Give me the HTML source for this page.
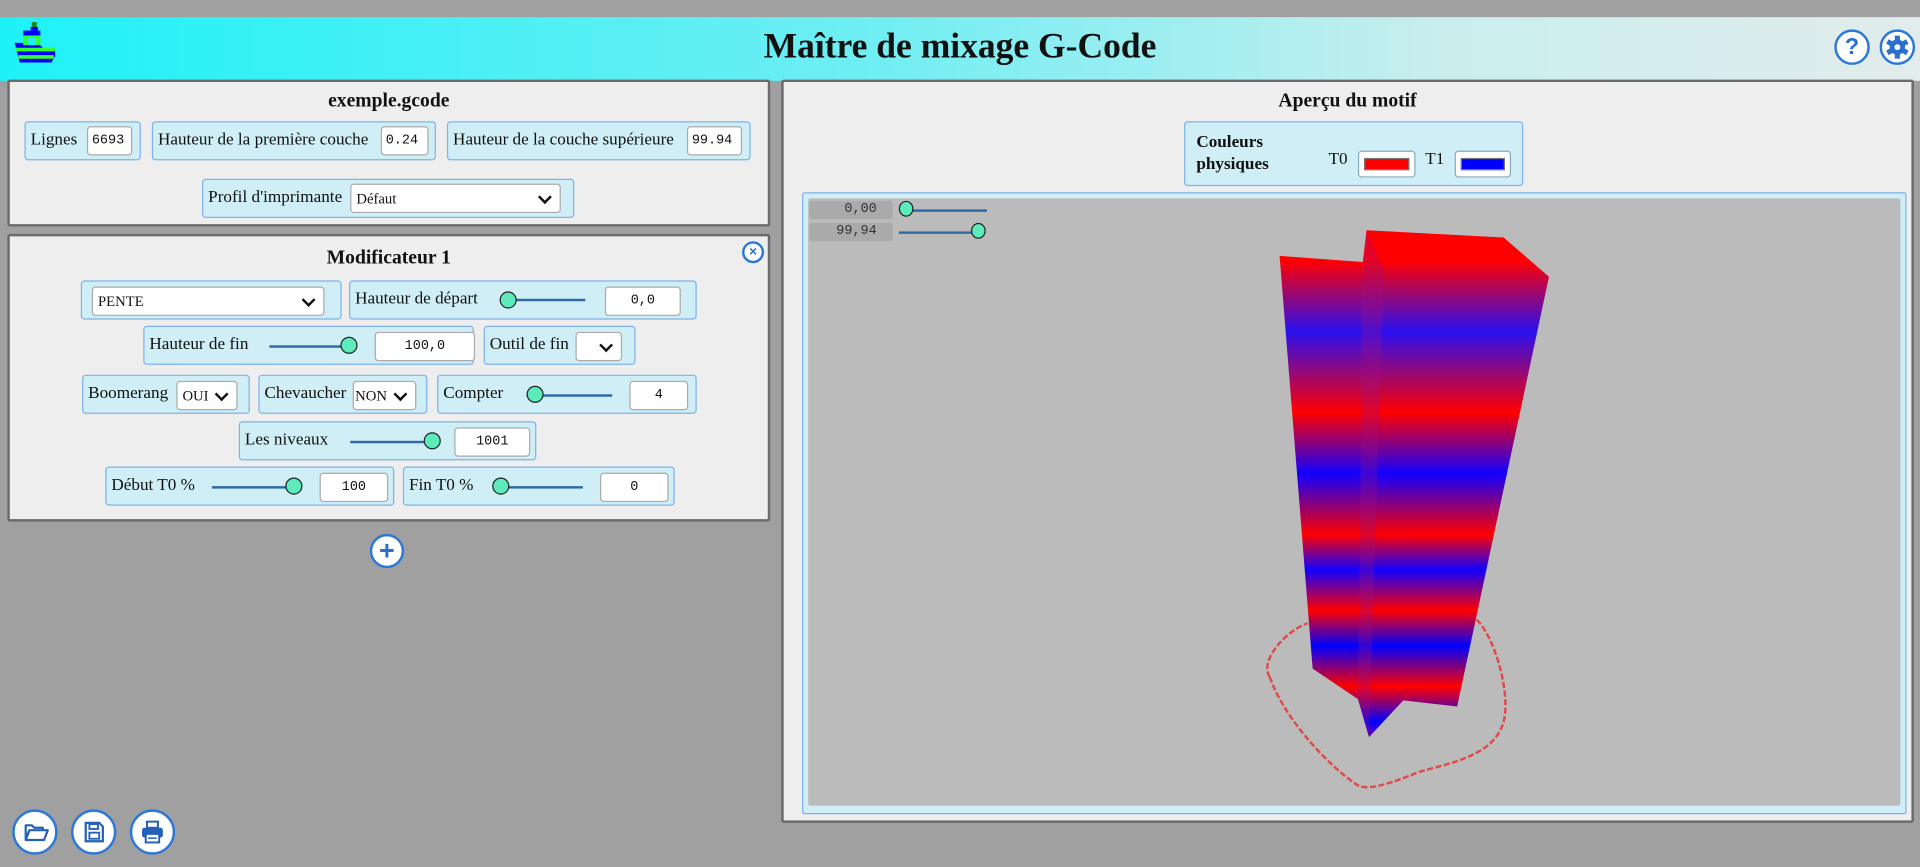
<!DOCTYPE html>
<html><head><meta charset="utf-8"><style>
*{box-sizing:border-box;margin:0;padding:0}
html,body{width:1920px;height:867px;overflow:hidden;background:#a0a0a0}
#w{position:absolute;left:0;top:0;width:1568px;height:708px;transform:scale(1.22449);transform-origin:0 0;font-family:"Liberation Serif",serif;font-size:14px;color:#111}
.a{position:absolute}
.hdr{left:0;top:14px;width:1568px;height:52px;background:linear-gradient(90deg,#1ef2f7 0%,#6eeef3 45%,#c9eeee 75%,#e2ecec 100%)}
.title{left:0;width:1568px;top:20px;text-align:center;font-weight:bold;font-size:29px;line-height:36px}
.panel{background:#eee;border:2px solid #6b6b6b;border-radius:2px}
.pt{position:absolute;left:0;right:0;text-align:center;font-weight:bold;font-size:16px}
.box{position:absolute;background:#cfeef6;border:1px solid #7fb2ea;border-radius:3px;height:32px}
.lab{position:absolute;top:7px;white-space:nowrap}
.inp{position:absolute;background:#fff;border:1px solid #aaa;border-radius:3px;font-family:"Liberation Mono",monospace;font-size:11px;line-height:22px;height:24px}
.sel{position:absolute;background:#fff;border:1px solid #aaa;border-radius:3px;height:24px;font-size:12px;line-height:22px;padding-left:4px}
.sel:after{content:"";position:absolute;right:8px;top:6px;width:6px;height:6px;border-right:2px solid #111;border-bottom:2px solid #111;transform:rotate(45deg)}
.trk{position:absolute;height:2px;background:#2e6aa6}
.th{position:absolute;width:14px;height:14px;border-radius:50%;background:#5eebbb;border:1.5px solid #222}
.circ{position:absolute;border-radius:50%;background:#fff;border:2px solid #2b78d8}
</style></head><body><div id="w">
<div class="a hdr"></div>
<svg class="a" style="left:11px;top:18px" width="40" height="34" viewBox="0 0 40 34">
<rect x="15" y="0" width="4" height="4" fill="#1a8a1a"/><rect x="14" y="4" width="6" height="3" fill="#00f"/>
<rect x="8" y="7" width="14" height="4" fill="#00f"/><rect x="8" y="11" width="4" height="8" fill="#3f3"/><rect x="18" y="11" width="4" height="8" fill="#3f3"/><rect x="12" y="11" width="6" height="2" fill="#3f3"/>
<path d="M1,17 L8,17 8,19 22,19 26,23 34,23 34,28 31,33 5,33 Z" fill="#00f"/>
<rect x="2" y="21" width="32" height="3" fill="#3f3"/><rect x="4" y="27" width="29" height="3" fill="#3f3"/>
</svg>
<div class="a title">Maître de mixage G-Code</div>
<div class="circ" style="left:1498px;top:24px;width:29px;height:29px;text-align:center;font:bold 19px/25px 'Liberation Sans',sans-serif;color:#2b6fd0">?</div>
<div class="circ" style="left:1535px;top:24px;width:29px;height:29px"><svg width="25" height="25" viewBox="0 0 24 24" style="position:absolute;left:0;top:0"><g transform="translate(12,12)" fill="#2b6fd0"><circle r="6"/><rect x="-2" y="-9" width="4" height="18"/><rect x="-2" y="-9" width="4" height="18" transform="rotate(60)"/><rect x="-2" y="-9" width="4" height="18" transform="rotate(120)"/><circle r="2.3" fill="#fff"/></g></svg></div>

<div class="a panel" style="left:6px;top:65px;width:623px;height:120px">
<div class="pt" style="top:7px">exemple.gcode</div>
<div class="box" style="left:12px;top:32px;width:95px"><span class="lab" style="left:4px">Lignes</span><div class="inp" style="left:50px;top:3px;width:37px;padding-left:3px">6693</div></div>
<div class="box" style="left:116px;top:32px;width:232px"><span class="lab" style="left:4px">Hauteur de la première couche</span><div class="inp" style="left:186px;top:3px;width:39px;padding-left:3px">0.24</div></div>
<div class="box" style="left:357px;top:32px;width:248px"><span class="lab" style="left:4px">Hauteur de la couche supérieure</span><div class="inp" style="left:195px;top:3px;width:45px;padding-left:3px">99.94</div></div>
<div class="box" style="left:157px;top:79px;width:304px"><span class="lab" style="left:4px">Profil d'imprimante</span><div class="sel" style="left:120px;top:3px;width:172px">Défaut</div></div>
</div>

<div class="a panel" style="left:6px;top:191px;width:623px;height:235px">
<div class="pt" style="top:9px">Modificateur 1</div>
<div class="circ" style="left:598px;top:4px;width:18px;height:18px;text-align:center;font:bold 11px/14px 'Liberation Sans',sans-serif;color:#2b6fd0">×</div>
<div class="box" style="left:58px;top:36px;width:213px"><div class="sel" style="left:8px;top:4px;width:190px">PENTE</div></div>
<div class="box" style="left:277px;top:36px;width:284px"><span class="lab" style="left:4px">Hauteur de départ</span><div class="trk" style="left:130px;top:14px;width:62px"></div><div class="th" style="left:122px;top:8px"></div><div class="inp" style="left:208px;top:4px;width:62px;text-align:center">0,0</div></div>
<div class="box" style="left:109px;top:73px;width:270px"><span class="lab" style="left:4px">Hauteur de fin</span><div class="trk" style="left:102px;top:15px;width:62px"></div><div class="th" style="left:160px;top:8px"></div><div class="inp" style="left:188px;top:4px;width:82px;text-align:center">100,0</div></div>
<div class="box" style="left:387px;top:73px;width:124px"><span class="lab" style="left:4px">Outil de fin</span><div class="sel" style="left:74px;top:4px;width:38px"></div></div>
<div class="box" style="left:59px;top:113px;width:137px"><span class="lab" style="left:4px">Boomerang</span><div class="sel" style="left:76px;top:4px;width:50px">OUI</div></div>
<div class="box" style="left:203px;top:113px;width:138px"><span class="lab" style="left:4px">Chevaucher</span><div class="sel" style="left:76px;top:4px;width:52px;padding-left:1px">NON</div></div>
<div class="box" style="left:349px;top:113px;width:212px"><span class="lab" style="left:4px">Compter</span><div class="trk" style="left:72px;top:15px;width:70px"></div><div class="th" style="left:72px;top:8px"></div><div class="inp" style="left:156px;top:4px;width:48px;text-align:center">4</div></div>
<div class="box" style="left:187px;top:151px;width:243px"><span class="lab" style="left:4px">Les niveaux</span><div class="trk" style="left:90px;top:15px;width:72px"></div><div class="th" style="left:150px;top:8px"></div><div class="inp" style="left:175px;top:4px;width:62px;text-align:center">1001</div></div>
<div class="box" style="left:78px;top:188px;width:236px"><span class="lab" style="left:4px">Début T0 %</span><div class="trk" style="left:86px;top:15px;width:72px"></div><div class="th" style="left:146px;top:8px"></div><div class="inp" style="left:174px;top:4px;width:56px;text-align:center">100</div></div>
<div class="box" style="left:321px;top:188px;width:222px"><span class="lab" style="left:4px">Fin T0 %</span><div class="trk" style="left:74px;top:15px;width:72px"></div><div class="th" style="left:72px;top:8px"></div><div class="inp" style="left:160px;top:4px;width:56px;text-align:center">0</div></div>
</div>

<div class="circ" style="left:302px;top:436px;width:28px;height:28px;text-align:center;font:bold 22px/23px 'Liberation Sans',sans-serif;color:#2b6fd0">+</div>

<div class="circ" style="left:10px;top:661px;width:37px;height:37px"><svg width="33" height="33" viewBox="0 0 33 33" style="position:absolute;left:0;top:0"><path d="M9,11 h5 l2,2 h7 v2 h-11 l-3,7 z M9,11 v12 h15 l3,-8 h-15 l-3,8" fill="none" stroke="#2460b8" stroke-width="1.8" stroke-linejoin="round"/></svg></div>
<div class="circ" style="left:58px;top:661px;width:37px;height:37px"><svg width="33" height="33" viewBox="0 0 33 33" style="position:absolute;left:0;top:0"><path d="M10,9 h11 l3,3 v12 h-14 z" fill="none" stroke="#2460b8" stroke-width="1.8"/><rect x="13" y="10" width="7" height="4" fill="none" stroke="#2460b8" stroke-width="1.5"/><rect x="13" y="17" width="8" height="5" fill="none" stroke="#2460b8" stroke-width="1.5"/></svg></div>
<div class="circ" style="left:106px;top:661px;width:37px;height:37px"><svg width="33" height="33" viewBox="0 0 33 33" style="position:absolute;left:0;top:0"><rect x="12" y="8" width="9" height="5" fill="none" stroke="#2460b8" stroke-width="1.6"/><rect x="8" y="13" width="17" height="8" rx="2" fill="#2460b8"/><rect x="11" y="18" width="11" height="7" fill="#fff" stroke="#2460b8" stroke-width="1.6"/><line x1="13" y1="21.5" x2="20" y2="21.5" stroke="#2460b8" stroke-width="1.2"/></svg></div>

<div class="a panel" style="left:638px;top:65px;width:925px;height:607px">
<div class="pt" style="top:7px">Aperçu du motif</div>
<div class="box" style="left:327px;top:32px;width:277px;height:53px"><div style="position:absolute;left:9px;top:8px;font-weight:bold;line-height:18px">Couleurs<br>physiques</div><span class="lab" style="left:117px;top:23px">T0</span><div style="position:absolute;left:141px;top:23px;width:47px;height:22px;background:#fff;border:1px solid #8ab;border-radius:3px"><div style="position:absolute;left:4px;top:5px;width:37px;height:10px;background:#f00;border:1px solid #777"></div></div><span class="lab" style="left:196px;top:23px">T1</span><div style="position:absolute;left:220px;top:23px;width:46px;height:22px;background:#fff;border:1px solid #8ab;border-radius:3px"><div style="position:absolute;left:4px;top:5px;width:36px;height:10px;background:#00f;border:1px solid #777"></div></div></div>
<div style="position:absolute;left:15px;top:90px;width:902px;height:508px;border:1px solid #7fb2ea;background:#cfeef6;border-radius:2px">
<div style="position:absolute;left:4px;top:4px;width:892px;height:496px;background:#bbb;border-radius:2px;overflow:hidden">
<div style="position:absolute;left:1px;top:2px;width:68px;height:15px;background:#aaa;border-radius:2px;font:11px/15px 'Liberation Mono',monospace;text-align:right;padding-right:13px;color:#333">0,00</div>
<div style="position:absolute;left:1px;top:20px;width:68px;height:15px;background:#aaa;border-radius:2px;font:11px/15px 'Liberation Mono',monospace;text-align:right;padding-right:13px;color:#333">99,94</div>
<div class="trk" style="left:78px;top:9px;width:68px"></div><div class="th" style="left:74px;top:2px;width:12px;height:13px"></div>
<div class="trk" style="left:74px;top:27px;width:66px"></div><div class="th" style="left:133px;top:20px;width:12px;height:13px"></div>
</div></div>
</div>

<svg class="a" style="left:0;top:0" width="1568" height="708">
<defs><linearGradient id="g" gradientUnits="userSpaceOnUse" x1="0" y1="188" x2="0" y2="602">
<stop offset="0" stop-color="#f00"/><stop offset=".06" stop-color="#f00"/><stop offset=".2" stop-color="#2a10f0"/><stop offset=".36" stop-color="#f00"/>
<stop offset=".48" stop-color="#10f"/><stop offset=".6" stop-color="#f00"/><stop offset=".67" stop-color="#10f"/><stop offset=".75" stop-color="#f00"/>
<stop offset=".82" stop-color="#00f"/><stop offset=".9" stop-color="#f00"/><stop offset=".97" stop-color="#00f"/><stop offset="1" stop-color="#60a"/></linearGradient></defs>
<path d="M1037,553 C1028,540 1050,515 1068,509 M1206,506 C1220,520 1232,560 1229,584 C1225,615 1190,622 1160,630 C1135,640 1120,645 1110,642 C1090,630 1050,590 1037,553" fill="none" stroke="#e24a4a" stroke-width="2" stroke-dasharray="5 2"/>
<polygon points="1045,209 1113,214 1116,188 1228,194 1265,226 1190,577 1146,572 1118,602 1109,571 1072,546" fill="url(#g)"/>
<polygon points="1113,214 1116,188 1130,220 1118,602 1109,571" fill="#a01080" opacity=".3"/>
</svg>
</div></body></html>
